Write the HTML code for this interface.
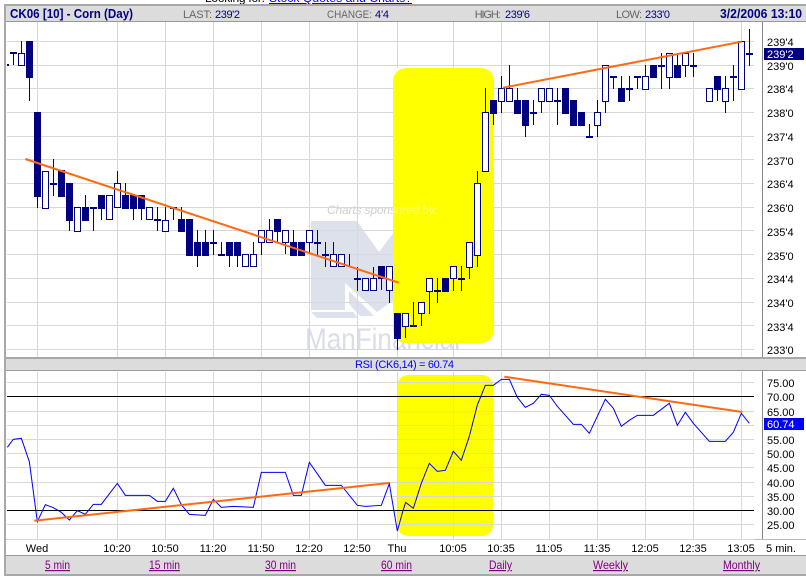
<!DOCTYPE html>
<html><head><meta charset="utf-8"><title>CK06 Corn chart</title>
<style>
html,body{margin:0;padding:0;background:#fff;width:806px;height:577px;overflow:hidden}
svg{display:block}
text{font-family:"Liberation Sans",Arial,sans-serif;font-size:11px}
.g{fill:#666}.n{fill:#000080}.b{font-weight:bold;font-size:13px}.k{fill:#000}.l{fill:#800080;font-size:12px;text-decoration:underline}
</style></head><body>
<svg width="806" height="577" viewBox="0 0 806 577" xmlns="http://www.w3.org/2000/svg">
<defs><clipPath id="yc"><rect x="393" y="68" width="101" height="275" rx="13"/></clipPath></defs>
<text x="205" y="2" class="k" style="font-size:12px" textLength="60">Looking for:</text>
<text x="269" y="2" style="font-size:12px;text-decoration:underline" fill="#0000ff" textLength="143" lengthAdjust="spacingAndGlyphs">Stock Quotes and Charts?</text>

<!-- frame -->
<rect x="4" y="4" width="802" height="572" fill="#a8a8a8"/>
<rect x="6" y="6" width="800" height="568" fill="#fff"/>
<rect x="6" y="6" width="800" height="15" fill="#dcdcdc"/>
<rect x="6" y="21" width="800" height="1" fill="#999"/>
<rect x="6" y="357" width="800" height="2" fill="#a8a8a8"/>
<rect x="6" y="359" width="800" height="11" fill="#dcdcdc"/>
<rect x="6" y="370" width="800" height="1" fill="#999"/>
<rect x="6" y="539" width="800" height="1" fill="#bbb"/>
<rect x="6" y="555" width="800" height="1" fill="#999"/>
<rect x="6" y="556" width="800" height="18" fill="#dcdcdc"/>

<!-- watermark -->
<g shape-rendering="auto">
<path fill="#dde1ec" d="M311 221H357L379 252L394 232V300L377 312L345 283V310H311Z"/>
<path fill="#dde1ec" d="M311 312H353L358 318H317Z"/>
<path fill="#dde1ec" d="M349 291L374 316L360 316L349 304Z"/>
<text x="305" y="349" style="font-size:30px" fill="#d9deea" textLength="155" lengthAdjust="spacingAndGlyphs">ManFinancial</text>
<text x="327" y="214" style="font-size:12px;font-style:italic" fill="#cfcfcf" textLength="111">Charts sponsored by:</text>
</g>

<!-- yellow highlights -->
<rect x="393" y="68" width="101" height="275" rx="13" fill="#ffff00"/>
<text x="327" y="214" style="font-size:12px;font-style:italic" fill="#ffff70" textLength="111" clip-path="url(#yc)">Charts sponsored by:</text>
<rect x="397" y="375" width="96" height="161" rx="11" fill="#ffff00"/>

<!-- grid -->
<g shape-rendering="crispEdges" stroke="#d8d8d8" stroke-width="1" fill="none">
<path d="M37.5 22V357M117.5 22V357M165.5 22V357M213.5 22V357M261.5 22V357M309.5 22V357M357.5 22V357M501.5 22V357M549.5 22V357M597.5 22V357M645.5 22V357M693.5 22V357M741.5 22V357"/>
<path d="M397.5 22V68M397.5 343V357M453.5 22V68M453.5 343V357"/>
<path d="M7 41.5H754M7 65.5H754M7 88.5H393M494 88.5H754M7 112.5H393M494 112.5H754M7 136.5H393M494 136.5H754M7 159.5H393M494 159.5H754M7 183.5H393M494 183.5H754M7 207.5H393M494 207.5H754M7 230.5H393M494 230.5H754M7 254.5H393M494 254.5H754M7 278.5H393M494 278.5H754M7 302.5H393M494 302.5H754M7 325.5H393M494 325.5H754M7 349.5H754"/>
<path d="M37.5 372V539M117.5 372V539M165.5 372V539M213.5 372V539M261.5 372V539M309.5 372V539M357.5 372V539M397.5 372V539M453.5 372V539M501.5 372V539M549.5 372V539M597.5 372V539M645.5 372V539M693.5 372V539M741.5 372V539"/>
<path d="M7 382.5H754M7 411.5H754M7 425.5H754M7 439.5H754M7 453.5H754M7 467.5H754M7 482.5H754M7 496.5H754M7 524.5H754M7 539.5H754"/>
</g>
<g shape-rendering="crispEdges">
<path stroke="#000" stroke-width="1" d="M7 396.5H754M7 510.5H754"/>
<path stroke="#888" stroke-width="1" d="M762.5 22V357M762.5 371V539"/>
</g>

<!-- candles -->
<g shape-rendering="crispEdges" stroke="#000080" fill="none">
<path stroke-width="1" d="M13.5 53V65M21.5 41V53M29.5 78V101M37.5 197V208M53.5 159V196M69.5 220V231M85.5 195V207M93.5 208V231M101.5 208V220M117.5 171V183M125.5 183V195M133.5 208V220M141.5 208V220M157.5 207V231M165.5 207V220M173.5 207V220M181.5 207V219M197.5 230V242M197.5 255V267M205.5 230V242M213.5 230V255M221.5 242V255M229.5 255V267M237.5 255V267M253.5 242V254M261.5 243V255M269.5 219V230M277.5 231V243M285.5 243V254M293.5 230V242M309.5 243V254M317.5 230V255M325.5 242V267M333.5 242V254M349.5 254V267M357.5 267V291M373.5 267V278M381.5 279V290M389.5 291V303M397.5 339V350M405.5 327V338M413.5 302V326M421.5 314V326M429.5 292V314M437.5 278V303M453.5 279V291M461.5 266V291M469.5 268V279M477.5 171V183M477.5 256V267M485.5 88V112M493.5 114V125M501.5 76V88M501.5 102V113M509.5 65V88M517.5 88V100M525.5 126V137M533.5 100V125M541.5 102V113M557.5 88V125M589.5 124V137M597.5 100V112M597.5 126V137M605.5 102V113M613.5 77V89M621.5 76V88M629.5 76V101M637.5 77V89M645.5 65V76M661.5 53V89M669.5 78V89M677.5 53V65M685.5 66V77M693.5 53V77M717.5 90V101M725.5 76V88M725.5 102V113M733.5 65V101M749.5 29V66"/>
<path stroke-width="7" d="M29.5 41V78M37.5 112V197M61.5 170V197M69.5 183V221M85.5 207V221M101.5 195V209M125.5 195V209M133.5 195V209M141.5 195V209M181.5 219V232M189.5 219V256M197.5 242V256M205.5 242V256M229.5 242V256M237.5 242V256M277.5 219V232M293.5 242V256M301.5 242V256M381.5 266V279M397.5 313V339M445.5 278V292M493.5 100V114M517.5 100V114M525.5 100V126M565.5 88V114M573.5 100V126M581.5 112V126M621.5 88V102M653.5 65V78M677.5 65V78M717.5 76V90"/>
<path stroke-width="2" d="M7 65h2M10 53h7M50 184h7M90 208h7M154 220h7M170 208h7M210 243h7M218 255h7M314 243h7M322 255h7M354 279h7M410 326h7M434 291h7M458 279h7M530 113h7M554 101h7M586 137h7M610 77h7M626 89h7M634 77h7M658 66h7M690 66h7M730 77h7M746 54h7"/>
<path stroke-width="1" fill="#fff" d="M18.5 53.5h6V65.5h-6zM42.5 171.5h6V208.5h-6zM74.5 207.5h6V231.5h-6zM106.5 195.5h6V219.5h-6zM114.5 183.5h6V207.5h-6zM146.5 207.5h6V219.5h-6zM162.5 220.5h6V231.5h-6zM242.5 254.5h6V266.5h-6zM250.5 254.5h6V266.5h-6zM258.5 230.5h6V242.5h-6zM266.5 230.5h6V242.5h-6zM282.5 230.5h6V242.5h-6zM306.5 230.5h6V242.5h-6zM330.5 254.5h6V266.5h-6zM338.5 254.5h6V266.5h-6zM362.5 278.5h6V290.5h-6zM370.5 278.5h6V290.5h-6zM386.5 266.5h6V290.5h-6zM402.5 313.5h6V326.5h-6zM418.5 302.5h6V313.5h-6zM426.5 278.5h6V291.5h-6zM450.5 266.5h6V278.5h-6zM466.5 242.5h6V267.5h-6zM474.5 183.5h6V255.5h-6zM482.5 112.5h6V171.5h-6zM498.5 88.5h6V101.5h-6zM506.5 88.5h6V101.5h-6zM538.5 88.5h6V101.5h-6zM546.5 88.5h6V101.5h-6zM594.5 112.5h6V125.5h-6zM602.5 65.5h6V101.5h-6zM642.5 76.5h6V89.5h-6zM666.5 53.5h6V77.5h-6zM682.5 53.5h6V65.5h-6zM706.5 88.5h6V101.5h-6zM722.5 88.5h6V101.5h-6zM738.5 41.5h6V89.5h-6z"/>
</g>

<!-- RSI line -->
<g fill="none" stroke="#0000ff" stroke-width="3" stroke-linejoin="miter">
<polyline transform="translate(0 355) scale(.33333)" points="22,277 40,253 64,250 88,320 112,500 136,449 160,458 184,472 208,495 232,467 256,478 280,448 304,448 352,385 376,421 448,421 472,439 496,439 520,400 544,449 568,478 616,481 640,433 664,457 700,454 760,457 784,352 856,352 880,421 904,421 928,322 976,391 1024,391 1072,451 1096,454 1144,451 1168,386 1192,528 1209,467"/>
<polyline transform="translate(403 355) scale(.33333)" points="0,467 8,442 31,460 55,385 79,325 103,349 127,346 151,289 175,316 199,244 223,150 247,91 271,91 295,73 319,73 343,127 367,157 391,145 415,118 439,121 463,154 487,181 511,208 535,208 559,235 583,184 607,133 631,160 655,214 679,196 703,181 751,181 775,163 799,145 823,211 847,172 871,205 895,232 919,259 967,259 991,232 1015,175 1039,205"/>
</g>

<!-- trend lines -->
<g stroke="#ff6a10" stroke-width="2" fill="none">
<path d="M25.3 159L398.7 282.7"/>
<path d="M503 87.7L741.7 41.7"/>
<path d="M34.3 520.7L389 483"/>
<path d="M504.3 376.7L742.3 412"/>
</g>

<!-- header -->
<text x="10" y="18" class="n b" textLength="123" lengthAdjust="spacingAndGlyphs">CK06 [10] - Corn (Day)</text>
<text x="183" y="18" class="g" textLength="29">LAST:</text><text x="215" y="18" class="n" textLength="25">239'2</text>
<text x="327" y="18" class="g" textLength="45" lengthAdjust="spacingAndGlyphs">CHANGE:</text><text x="375" y="18" class="n" textLength="14">4'4</text>
<text x="474.7" y="18" class="g" textLength="26">HIGH:</text><text x="505" y="18" class="n" textLength="25">239'6</text>
<text x="616" y="18" class="g" textLength="26">LOW:</text><text x="645" y="18" class="n" textLength="25">233'0</text>
<text x="720" y="18" class="n b" textLength="82" lengthAdjust="spacingAndGlyphs">3/2/2006 13:10</text>

<!-- price axis -->
<g class="k">
<text x="767" y="46">239'4</text>
<rect x="764" y="48" width="40" height="12" fill="#000080"/>
<text x="767" y="58" style="fill:#fff">239'2</text>
<text x="767" y="70">239'0</text>
<text x="767" y="93">238'4</text>
<text x="767" y="117">238'0</text>
<text x="767" y="141">237'4</text>
<text x="767" y="165">237'0</text>
<text x="767" y="188">236'4</text>
<text x="767" y="212">236'0</text>
<text x="767" y="236">235'4</text>
<text x="767" y="260">235'0</text>
<text x="767" y="283">234'4</text>
<text x="767" y="307">234'0</text>
<text x="767" y="331">233'4</text>
<text x="767" y="354">233'0</text>
</g>

<!-- RSI title + axis -->
<text x="355" y="368" fill="#0000ff" textLength="99">RSI (CK6,14) = 60.74</text>
<g class="k">
<text x="767" y="387">75.00</text>
<text x="767" y="401">70.00</text>
<text x="767" y="416">65.00</text>
<rect x="764" y="418" width="40" height="12" fill="#0000ff"/>
<text x="767" y="428" style="fill:#fff">60.74</text>
<text x="767" y="444">55.00</text>
<text x="767" y="458">50.00</text>
<text x="767" y="472">45.00</text>
<text x="767" y="487">40.00</text>
<text x="767" y="501">35.00</text>
<text x="767" y="515">30.00</text>
<text x="767" y="529">25.00</text>
</g>

<!-- time axis -->
<g class="k" text-anchor="middle">
<text x="37" y="552">Wed</text>
<text x="117" y="552">10:20</text>
<text x="165" y="552">10:50</text>
<text x="213" y="552">11:20</text>
<text x="261" y="552">11:50</text>
<text x="309" y="552">12:20</text>
<text x="357" y="552">12:50</text>
<text x="397" y="552">Thu</text>
<text x="453" y="552">10:05</text>
<text x="501" y="552">10:35</text>
<text x="549" y="552">11:05</text>
<text x="597" y="552">11:35</text>
<text x="645" y="552">12:05</text>
<text x="693" y="552">12:35</text>
<text x="741" y="552">13:05</text>
<text x="781" y="552">5 min.</text>
</g>

<!-- footer links -->
<text x="45" y="569" class="l" textLength="25" lengthAdjust="spacingAndGlyphs">5 min</text>
<text x="149" y="569" class="l" textLength="31" lengthAdjust="spacingAndGlyphs">15 min</text>
<text x="265" y="569" class="l" textLength="31" lengthAdjust="spacingAndGlyphs">30 min</text>
<text x="381" y="569" class="l" textLength="31" lengthAdjust="spacingAndGlyphs">60 min</text>
<text x="489" y="569" class="l" textLength="23" lengthAdjust="spacingAndGlyphs">Daily</text>
<text x="593" y="569" class="l" textLength="35" lengthAdjust="spacingAndGlyphs">Weekly</text>
<text x="723" y="569" class="l" textLength="37" lengthAdjust="spacingAndGlyphs">Monthly</text>
</svg>
</body></html>
